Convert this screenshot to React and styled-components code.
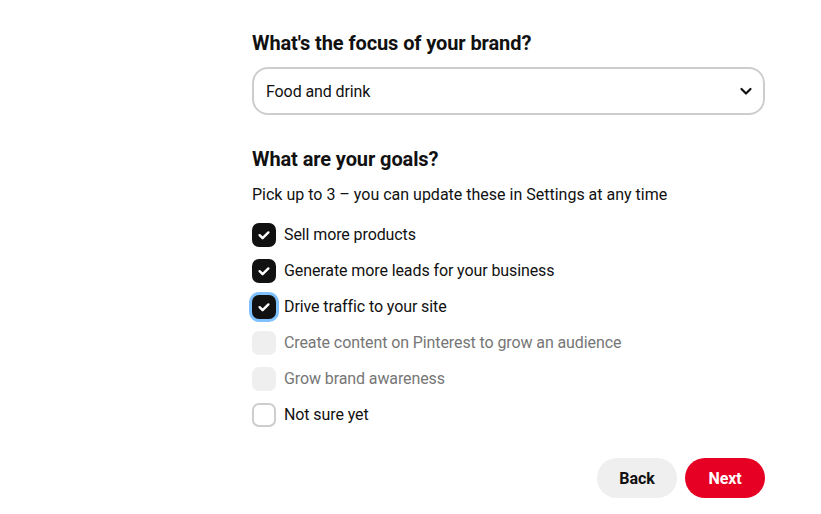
import { useState } from "react";
import styled, { createGlobalStyle } from "styled-components";

const GlobalStyle = createGlobalStyle`
  body {
    margin: 0;
    background: #fff;
    font-family: Roboto, "Helvetica Neue", Arial, sans-serif;
    color: #111;
    letter-spacing: -0.1px;
  }
`;

const Page = styled.div`
  padding: 31px 0 0 252px;
`;

const Form = styled.div`
  width: 513px;
  display: flex;
  flex-direction: column;
`;

const Heading = styled.h2`
  margin: 0 0 12px;
  font-size: 20px;
  line-height: 24px;
  font-weight: 700;
  color: #111;
`;

const Section = styled.div`
  display: flex;
  flex-direction: column;
  margin-top: ${(p) => p.$gap || 0}px;
`;

const SelectBox = styled.button`
  display: flex;
  align-items: center;
  justify-content: space-between;
  height: 48px;
  padding: 0 9px 0 12px;
  border: 2px solid #cdcdcd;
  border-radius: 16px;
  background: #fff;
  font-family: inherit;
  letter-spacing: inherit;
  font-size: 16px;
  color: #111;
  cursor: pointer;
`;

const Hint = styled.p`
  margin: 0 0 16px;
  font-size: 16px;
  line-height: 24px;
  letter-spacing: normal;
  color: #111;
`;

const Options = styled.div`
  display: flex;
  flex-direction: column;
  gap: 12px;
`;

const Option = styled.label`
  display: flex;
  align-items: center;
  gap: 8px;
  font-size: 16px;
  line-height: 24px;
  color: ${(p) => (p.$disabled ? "#767676" : "#111")};
  cursor: ${(p) => (p.$disabled ? "default" : "pointer")};
`;

const Box = styled.span`
  width: 24px;
  height: 24px;
  box-sizing: border-box;
  border-radius: 7px;
  display: flex;
  align-items: center;
  justify-content: center;
  flex-shrink: 0;
  background: ${(p) => (p.$checked ? "#111" : p.$disabled ? "#efefef" : "#fff")};
  border: ${(p) =>
    p.$checked || p.$disabled ? "none" : "2px solid #cdcdcd"};
  box-shadow: ${(p) => (p.$focus ? "0 0 0 3px #7fc1ff" : "none")};
`;

const Actions = styled.div`
  display: flex;
  justify-content: flex-end;
  gap: 8px;
  margin-top: 31px;
`;

const Button = styled.button`
  height: 40px;
  min-width: 80px;
  padding: 0 16px;
  border: none;
  border-radius: 20px;
  font-family: inherit;
  letter-spacing: inherit;
  font-size: 16px;
  font-weight: 700;
  background: ${(p) => (p.$primary ? "#e60023" : "#efefef")};
  color: ${(p) => (p.$primary ? "#fff" : "#111")};
  cursor: pointer;
`;

const Check = () => (
  <svg width="14" height="14" viewBox="0 0 14 14">
    <path
      d="M2.6 7.2l3 3L11.4 4.4"
      fill="none"
      stroke="#fff"
      strokeWidth="2.4"
      strokeLinecap="round"
      strokeLinejoin="round"
    />
  </svg>
);

const Chevron = () => (
  <svg width="16" height="16" viewBox="0 0 16 16">
    <path
      d="M3.5 6l4.5 4.5L12.5 6"
      fill="none"
      stroke="#111"
      strokeWidth="2.2"
      strokeLinecap="round"
      strokeLinejoin="round"
    />
  </svg>
);

const goals = [
  { label: "Sell more products", checked: true },
  { label: "Generate more leads for your business", checked: true },
  { label: "Drive traffic to your site", checked: true, focus: true },
  { label: "Create content on Pinterest to grow an audience", disabled: true },
  { label: "Grow brand awareness", disabled: true },
  { label: "Not sure yet" },
];

const App = () => {
  const [items] = useState(goals);

  return (
    <Page>
      <GlobalStyle />
      <Form>
        <Section>
          <Heading>What's the focus of your brand?</Heading>
          <SelectBox>
            <span>Food and drink</span>
            <Chevron />
          </SelectBox>
        </Section>

        <Section $gap={32}>
          <Heading>What are your goals?</Heading>
          <Hint>Pick up to 3 – you can update these in Settings at any time</Hint>
          <Options>
            {items.map((g) => (
              <Option key={g.label} $disabled={g.disabled}>
                <Box $checked={g.checked} $disabled={g.disabled} $focus={g.focus}>
                  {g.checked && <Check />}
                </Box>
                {g.label}
              </Option>
            ))}
          </Options>
        </Section>

        <Actions>
          <Button>Back</Button>
          <Button $primary>Next</Button>
        </Actions>
      </Form>
    </Page>
  );
};

export default App;
